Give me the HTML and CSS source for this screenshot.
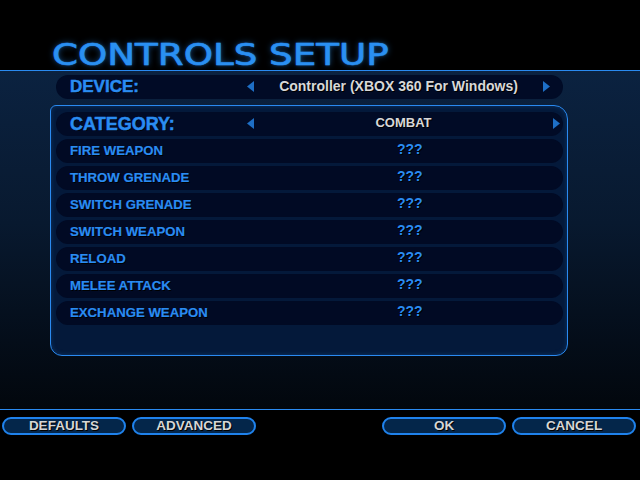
FILE: index.html
```html
<!DOCTYPE html>
<html>
<head>
<meta charset="utf-8">
<link rel="stylesheet" href="styles.css">
</head>
<body>
<div class="screen">
  <header class="header">
    <h1 class="title">CONTROLS SETUP</h1>
  </header>
  <main class="main">
    <div class="selector device">
      <span class="sel-label">DEVICE:</span>
      <svg class="arrow" width="7" height="11" viewBox="0 0 7 11"><polygon points="7,0 7,11 0,5.5" fill="#1e6fc6"/></svg>
      <span class="sel-value device-value">Controller (XBOX 360 For Windows)</span>
      <svg class="arrow" width="7" height="11" viewBox="0 0 7 11"><polygon points="0,0 0,11 7,5.5" fill="#1e6fc6"/></svg>
    </div>
    <section class="panel">
      <div class="selector category">
        <span class="sel-label cat-label">CATEGORY:</span>
        <svg class="arrow" width="7" height="11" viewBox="0 0 7 11"><polygon points="7,0 7,11 0,5.5" fill="#1e6fc6"/></svg>
        <span class="sel-value cat-value">COMBAT</span>
        <svg class="arrow" width="7" height="11" viewBox="0 0 7 11"><polygon points="0,0 0,11 7,5.5" fill="#1e6fc6"/></svg>
      </div>
      <div class="row"><span class="label">FIRE WEAPON</span><span class="value">???</span></div>
      <div class="row"><span class="label">THROW GRENADE</span><span class="value">???</span></div>
      <div class="row"><span class="label">SWITCH GRENADE</span><span class="value">???</span></div>
      <div class="row"><span class="label">SWITCH WEAPON</span><span class="value">???</span></div>
      <div class="row"><span class="label">RELOAD</span><span class="value">???</span></div>
      <div class="row"><span class="label">MELEE ATTACK</span><span class="value">???</span></div>
      <div class="row"><span class="label">EXCHANGE WEAPON</span><span class="value">???</span></div>
    </section>
  </main>
  <footer class="footer">
    <div class="btn-group">
      <button class="btn">DEFAULTS</button>
      <button class="btn">ADVANCED</button>
    </div>
    <div class="btn-group">
      <button class="btn">OK</button>
      <button class="btn">CANCEL</button>
    </div>
  </footer>
</div>
</body>
</html>
```

FILE: styles.css
```css
html, body {
  margin: 0;
  padding: 0;
  background: #000;
}

.screen {
  width: 640px;
  height: 480px;
  overflow: hidden;
  background: #000;
  font-family: "Liberation Sans", Arial, sans-serif;
}

.header {
  height: 70px;
  box-sizing: border-box;
  padding: 39px 0 0 52px;
}

.title {
  margin: 0;
  display: inline-block;
  font-family: "DejaVu Sans", sans-serif;
  font-weight: normal;
  font-size: 30px;
  line-height: 32px;
  color: #2a90f2;
  -webkit-text-stroke: 0.6px #2a90f2;
  text-shadow: 0 0 6px rgba(40, 140, 240, 0.55), 0 0 2px rgba(40, 140, 240, 0.6);
  white-space: nowrap;
  transform: scaleX(1.24);
  transform-origin: left center;
}

.main {
  height: 340px;
  box-sizing: border-box;
  border-top: 1px solid #2a8af0;
  border-bottom: 1px solid #2a8af0;
  background: linear-gradient(180deg, #0b2240 0%, #08192f 45%, #040d19 80%, #02070d 100%);
  padding: 4px 0 0 0;
}

.selector {
  display: flex;
  align-items: flex-start;
  height: 24px;
  box-sizing: border-box;
  background: #010b26;
  border-radius: 12px;
}

.device {
  width: 507px;
  margin-left: 56px;
  padding-right: 13px;
}

.sel-label {
  width: 177px;
  padding-left: 14px;
  color: #2a8cf2;
  font-weight: bold;
  font-size: 17px;
  line-height: 24px;
  -webkit-text-stroke: 0.5px #2a8cf2;
  text-shadow: 1px 1px 0 #000;
  white-space: nowrap;
}

.cat-label {
  font-size: 18px;
}

.arrow {
  display: block;
  margin-top: 6px;
  flex: none;
}

.sel-value {
  flex: 1;
  text-align: center;
  color: #d8d8d8;
  font-weight: bold;
  font-size: 14px;
  line-height: 22px;
  text-shadow: 1px 1px 0 #000;
  white-space: nowrap;
}

.device-value {
  font-size: 14px;
}

.cat-value {
  font-size: 13px;
  line-height: 21px;
}

.panel {
  margin: 6px 0 0 50px;
  width: 518px;
  height: 251px;
  box-sizing: border-box;
  border: 1px solid #2a8af0;
  border-radius: 6px 14px 12px 12px;
  background: #04193a;
  box-shadow: inset 0 0 5px rgba(40, 140, 240, 0.25);
  padding: 6px 0 0 5px;
  display: flex;
  flex-direction: column;
  gap: 3px;
}

.category {
  width: 507px;
  padding-right: 3px;
}

.row {
  width: 507px;
  height: 24px;
  box-sizing: border-box;
  background: #010a24;
  border-radius: 12px;
  display: grid;
  grid-template-columns: 327px 1fr;
  padding-left: 14px;
  align-items: start;
}

.label {
  color: #2a8cf2;
  font-weight: bold;
  font-size: 13.2px;
  line-height: 24px;
  -webkit-text-stroke: 0.2px #2a8cf2;
  text-shadow: 1px 1px 0 #000;
  white-space: nowrap;
}

.value {
  color: #2a8cf2;
  font-weight: bold;
  font-size: 14px;
  line-height: 20px;
  text-shadow: 1px 1px 0 #000;
}

.footer {
  height: 70px;
  box-sizing: border-box;
  padding: 7px 4px 0 2px;
  display: flex;
  justify-content: space-between;
  align-items: flex-start;
  background: #000;
}

.btn-group {
  display: flex;
  gap: 6px;
}

.btn {
  width: 124px;
  height: 18px;
  box-sizing: border-box;
  border: 2px solid #1f82ec;
  border-radius: 9px;
  background: #04264a;
  color: #d6d6d6;
  font-family: "Liberation Sans", Arial, sans-serif;
  font-weight: bold;
  font-size: 13.5px;
  line-height: 14px;
  padding: 0;
  text-shadow: 1px 1px 0 #000;
}
```
